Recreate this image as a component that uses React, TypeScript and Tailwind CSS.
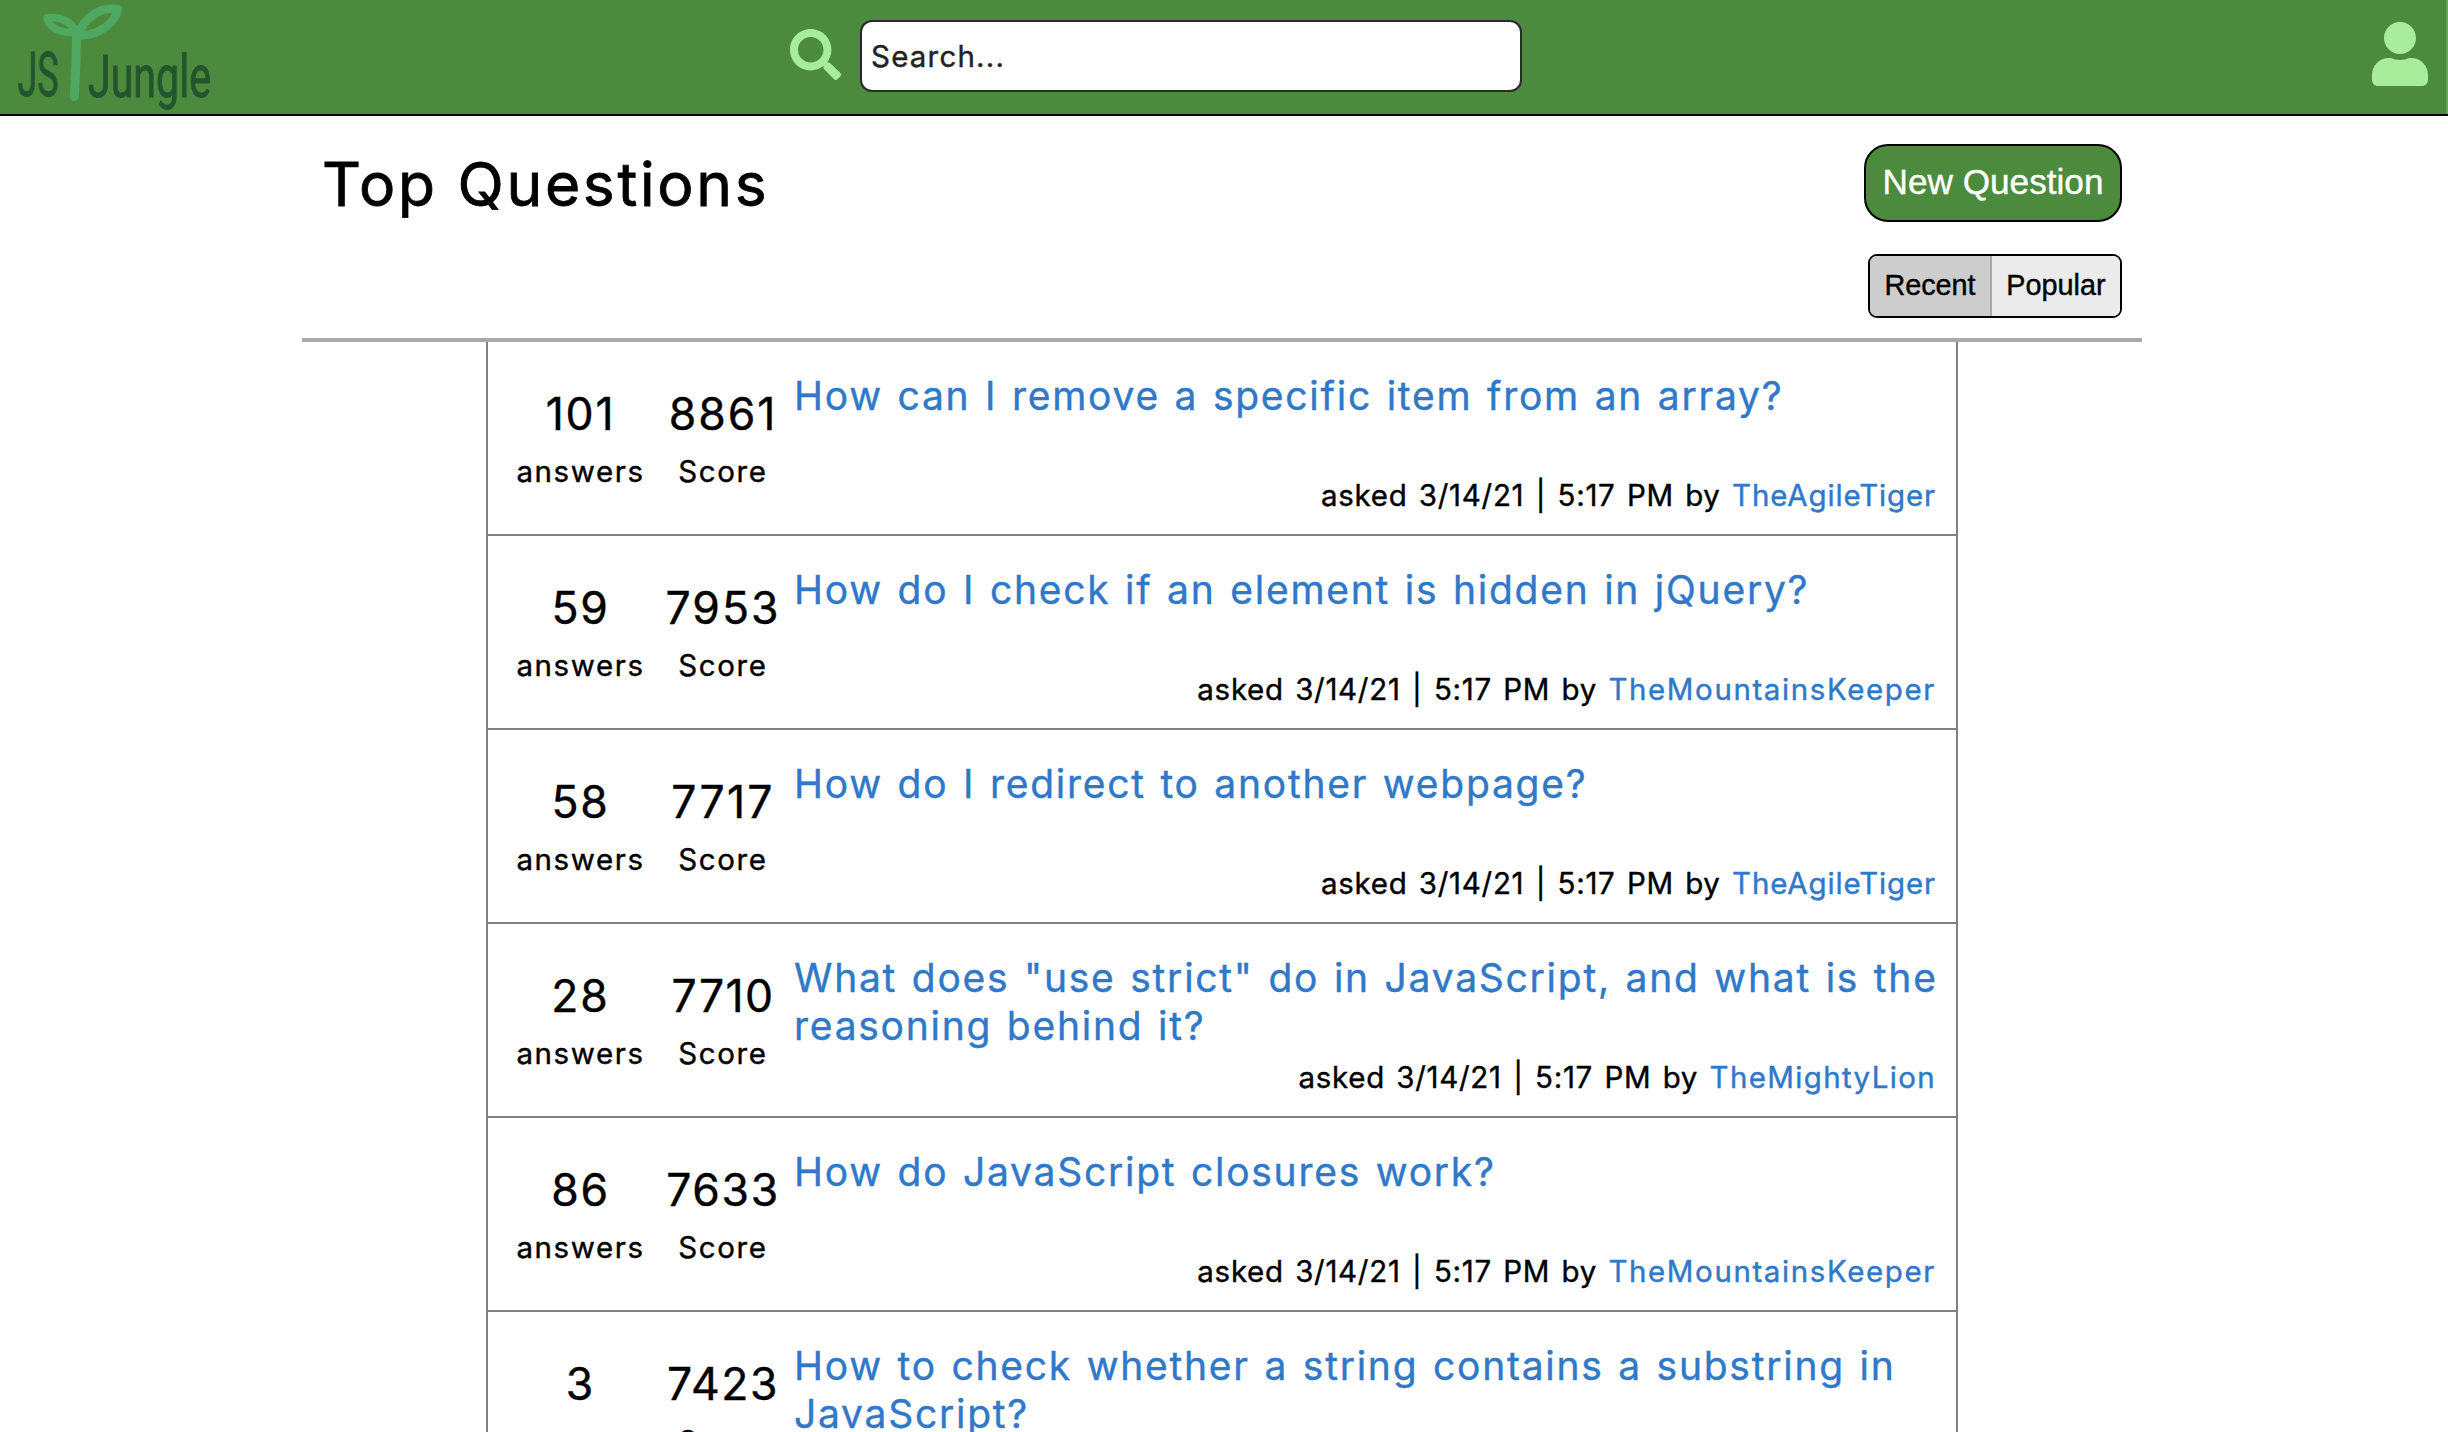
import { FaSearch } from "react-icons/fa";

type Question = {
  answers: number;
  score: number;
  title: string;
  author: string;
  nameTracking: string;
  scoreTracking: string;
};

const questions: Question[] = [
  { answers: 101, score: 8861, title: "How can I remove a specific item from an array?", author: "TheAgileTiger", nameTracking: "tracking-[0.85px]", scoreTracking: "tracking-[2px]" },
  { answers: 59, score: 7953, title: "How do I check if an element is hidden in jQuery?", author: "TheMountainsKeeper", nameTracking: "tracking-[1.6px]", scoreTracking: "tracking-[2px]" },
  { answers: 58, score: 7717, title: "How do I redirect to another webpage?", author: "TheAgileTiger", nameTracking: "tracking-[0.85px]", scoreTracking: "tracking-[2.2px]" },
  { answers: 28, score: 7710, title: 'What does "use strict" do in JavaScript, and what is the reasoning behind it?', author: "TheMightyLion", nameTracking: "tracking-[1.35px]", scoreTracking: "tracking-[1.4px]" },
  { answers: 86, score: 7633, title: "How do JavaScript closures work?", author: "TheMountainsKeeper", nameTracking: "tracking-[1.6px]", scoreTracking: "tracking-[1.6px]" },
  { answers: 3, score: 7423, title: "How to check whether a string contains a substring in JavaScript?", author: "TheMountainsKeeper", nameTracking: "tracking-[1.6px]", scoreTracking: "tracking-[1.5px]" },
];

function Logo() {
  return (
    <svg width="240" height="114" viewBox="0 0 240 114" className="block shrink-0">
      <g fill="#25552f" stroke="#25552f" strokeWidth="1" fontFamily="Roboto, sans-serif" fontWeight="400">
        <text x="17.5" y="95.5" fontSize="61" textLength="41" lengthAdjust="spacingAndGlyphs">JS</text>
        <text x="88" y="97" fontSize="59" textLength="123" lengthAdjust="spacingAndGlyphs">Jungle</text>
      </g>
      <g fill="none" stroke="#4fa862" strokeLinecap="round" strokeLinejoin="round">
        <path d="M76.5 36 C76.500 55 75.500 75 74.300 96.500" strokeWidth="9" />
        <path d="M76 31 C70 21 60 16.5 47 17.800 C49 27 58 33 75 32.500" strokeWidth="7.5" />
        <path d="M78 33 C87 16 100 6.500 118 9.200 C117 20 99 37 79 35" strokeWidth="8.5" />
      </g>
    </svg>
  );
}

function UserIcon() {
  return (
    <svg width="56" height="64" viewBox="0 0 448 512" fill="#a7ed9b">
      <path d="M224 256c70.700 0 128-57.300 128-128S294.700 0 224 0 96 57.300 96 128s57.300 128 128 128zm89.600 32h-16.700c-22.200 10.200-46.900 16-72.900 16s-50.600-5.800-72.900-16h-16.700C60.200 288 0 348.200 0 422.400V464c0 26.500 21.500 48 48 48h352c26.500 0 48-21.500 48-48v-41.600c0-74.200-60.200-134.400-134.400-134.400z" />
    </svg>
  );
}

function Stat({ value, label, tracking }: { value: number; label: string; tracking: string }) {
  return (
    <div className="flex flex-col items-center">
      <div className={`text-[44.5px] leading-[56px] ${tracking}`}>{value}</div>
      <div className="mt-[11px] text-[29.5px] leading-[36px] tracking-[1.6px]">{label}</div>
    </div>
  );
}

function QuestionRow({ q }: { q: Question }) {
  return (
    <li className="flex h-[194px] border-b-2 border-[#808080]">
      <div className="grid w-[306px] shrink-0 grid-cols-[185px_100px] pt-[44px]">
        <Stat value={q.answers} label="answers" tracking="tracking-[1.8px]" />
        <Stat value={q.score} label="Score" tracking={q.scoreTracking} />
      </div>
      <div className="flex grow flex-col pt-[30px] pr-[20px]">
        <a className="-mr-[10px] h-[96px] text-[39px] leading-[48px] tracking-[1.74px] text-[#3078c8] [word-spacing:2px]">{q.title}</a>
        <div className="mt-[9px] text-right text-[29.5px] leading-[36px] tracking-[0.7px] whitespace-nowrap [word-spacing:2.4px]">
          asked 3/14/21 | 5:17 PM by <a className={`text-[#3078c8] ${q.nameTracking}`}>{q.author}</a>
        </div>
      </div>
    </li>
  );
}

export default function App() {
  return (
    <div className="h-[1432px] overflow-hidden bg-white font-['Inter',sans-serif] text-black [-webkit-text-stroke:0.4px]">
      <header className="flex h-[116px] border-b-2 border-black bg-[#4c8b3d]">
        <Logo />
        <FaSearch className="mt-[29px] ml-[550px] size-[51px] shrink-0 text-[#a7ed9b]" />
        <div className="mt-[20px] ml-[19px] flex h-[72px] w-[662px] shrink-0 items-center rounded-[12px] border-2 border-[#292929] bg-white pt-[1px] pl-[9px] text-[29.5px] tracking-[1.2px] text-[#222]">
          Search...
        </div>
        <div className="mt-[22px] mr-[18px] ml-auto">
          <UserIcon />
        </div>
        <div className="w-[2px] bg-[#6aa35c]" />
      </header>

      <main className="mx-auto w-[1840px] -translate-x-[2px]">
        <div className="flex h-[226px] justify-between border-b-4 border-[#a9a9a9] pr-[20px] pl-[20px]">
          <h1 className="mt-[32px] text-[60.5px] leading-[72px] tracking-[2.7px] [-webkit-text-stroke:0.8px]">Top Questions</h1>
          <div className="flex flex-col items-end pt-[28px] font-['Liberation_Sans',Arial,sans-serif]">
            <button className="h-[78px] w-[258px] rounded-[24px] border-2 border-black bg-[#4c8b3d] pb-[2px] text-[35.2px] whitespace-nowrap text-white">New Question</button>
            <div className="mt-[32px] flex h-[64px] w-[254px] overflow-hidden rounded-[9px] border-2 border-black text-[28.8px]">
              <button className="w-[122px] border-r-2 border-[#a9a9a9] bg-[#cdcdcd]">Recent</button>
              <button className="grow bg-[#ebebeb]">Popular</button>
            </div>
          </div>
        </div>

        <ul className="mx-auto w-[1472px] border-x-2 border-[#808080]">
          {questions.map((q) => (
            <QuestionRow key={q.title} q={q} />
          ))}
        </ul>
      </main>
    </div>
  );
}
